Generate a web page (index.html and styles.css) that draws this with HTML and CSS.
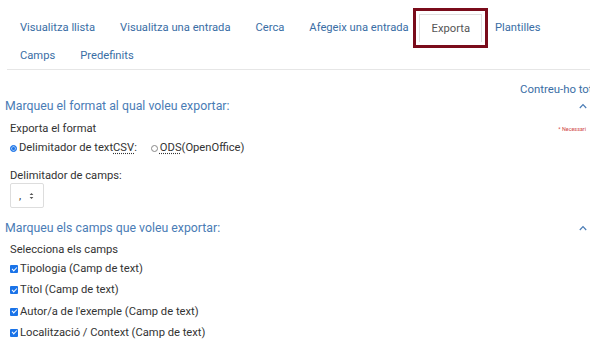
FILE: index.html
```html
<!DOCTYPE html>
<html lang="ca">
<head>
<meta charset="UTF-8">
<meta name="viewport" content="width=device-width, initial-scale=1.0">
<title>Exporta</title>
<link rel="stylesheet" href="styles.css">
</head>
<body>

<ul class="tabs">
    <li><a href="#">Visualitza llista</a></li>
    <li><a href="#">Visualitza una entrada</a></li>
    <li><a href="#">Cerca</a></li>
    <li><a href="#">Afegeix una entrada</a></li>
    <li class="active"><a href="#">Exporta</a></li>
    <li><a href="#">Plantilles</a></li>
    <li><a href="#">Camps</a></li>
    <li><a href="#">Predefinits</a></li>
</ul>

<div class="collapse-all"><a href="#">Contreu-ho tot</a></div>

<form class="export-form">
    <div class="section-head">
        <span>Marqueu el format al qual voleu exportar:</span>
        <svg class="chevron" width="8" height="6" viewBox="0 0 8 6"><path d="M0.8 5 L4 1.6 L7.2 5" fill="none" stroke="#4a7cb5" stroke-width="1.2"/></svg>
    </div>
    <div class="field-title">
        <span>Exporta el format</span>
        <span class="required">* Necessari</span>
    </div>
    <div class="radios">
        <label><input type="radio" name="format" checked> Delimitador de text<abbr title="Comma-separated values">CSV</abbr>:</label>
        <label><input type="radio" name="format"> <abbr title="OpenDocument Spreadsheet">ODS</abbr>(OpenOffice)</label>
    </div>

    <div class="field-title spaced">Delimitador de camps:</div>
    <div class="select-box">
        <span>,</span>
        <svg width="5" height="8" viewBox="0 0 5 8"><path d="M0.6 3 L2.5 1 L4.4 3 Z M0.6 5 L2.5 7 L4.4 5 Z" fill="#555"/></svg>
    </div>

    <div class="section-head second">
        <span>Marqueu els camps que voleu exportar:</span>
        <svg class="chevron" width="8" height="6" viewBox="0 0 8 6"><path d="M0.8 5 L4 1.6 L7.2 5" fill="none" stroke="#4a7cb5" stroke-width="1.2"/></svg>
    </div>
    <div class="field-title">Selecciona els camps</div>
    <div class="checks">
        <label><input type="checkbox" checked> Tipologia (Camp de text)</label>
        <label><input type="checkbox" checked> Títol (Camp de text)</label>
        <label><input type="checkbox" checked> Autor/a de l'exemple (Camp de text)</label>
        <label><input type="checkbox" checked> Localització / Context (Camp de text)</label>
    </div>
</form>

</body>
</html>
```

FILE: styles.css
```css
/* Pàgina */
body {
    margin: 0;
    padding-top: 13px;
    font-family: Roboto, "Liberation Sans", sans-serif;
    font-size: 11.2px;
    color: #333333;
    background: #ffffff;
    overflow: hidden;
}

a {
    text-decoration: none;
    color: #3a6ea5;
}

/* Pestanyes */
.tabs {
    list-style: none;
    margin: 0 0 0 7px;
    padding: 0;
    display: flex;
    flex-wrap: wrap;
    border-bottom: 1px solid #e6e6e6;
    width: 560px;
    padding-right: 23px;
}

.tabs li a {
    display: block;
    line-height: 27px;
    padding: 0 11px 0 12px;
    border: 1px solid transparent;
    border-bottom: none;
}

.tabs li.active a {
    color: #555555;
    border-color: #e0e0e0;
    background: #ffffff;
    margin: 1px 0 -2px -2px;
    outline: 3px solid #7a0c1b;
    outline-offset: 3px;
}

/* Enllaç contreu-ho tot */
.collapse-all {
    padding: 11px 0 0 520px;
    white-space: nowrap;
    line-height: 16px;
    font-size: 11.4px;
}

/* Formulari */
.export-form {
    padding: 0 3px 0 5px;
}

.section-head {
    display: flex;
    justify-content: space-between;
    align-items: center;
    color: #4a7cb5;
    line-height: 18px;
    font-size: 12.3px;
}

.section-head.second {
    margin-top: 11px;
}

.field-title {
    display: flex;
    justify-content: space-between;
    align-items: center;
    padding-left: 5px;
    margin-top: 6px;
    line-height: 16px;
}

.field-title.spaced {
    margin-top: 12px;
}

.section-head.second + .field-title {
    margin-top: 5px;
}

.required {
    color: #d04545;
    font-size: 5.4px;
    margin-right: 1px;
}

abbr {
    text-decoration: underline dotted;
    text-underline-offset: 2px;
}

/* Botons d'opció */
.radios {
    display: flex;
    gap: 14px;
    padding-left: 5px;
    margin-top: 3px;
    line-height: 16px;
}

.radios label,
.checks label {
    display: flex;
    align-items: center;
}

input[type="radio"] {
    appearance: none;
    width: 7px;
    height: 7px;
    margin: 0 2px 0 0;
    border: 1px solid #888888;
    border-radius: 50%;
    background: #ffffff;
}

input[type="radio"]:checked {
    border-color: #1a73e8;
    background: #1a73e8;
    box-shadow: inset 0 0 0 1px #9ec3f3;
}

/* Selector */
.select-box {
    margin: -1px 0 0 5px;
    width: 34px;
    height: 25px;
    border: 1px solid #dddddd;
    border-radius: 2px;
    display: flex;
    align-items: center;
    justify-content: space-between;
    padding: 0 9px 0 8px;
    box-sizing: border-box;
    font-size: 11px;
}

/* Caselles */
.checks {
    padding-left: 5px;
    margin-top: 3px;
}

.checks label {
    line-height: 16px;
    margin-bottom: 5.3px;
}

input[type="checkbox"] {
    appearance: none;
    width: 8px;
    height: 8px;
    margin: 0 2px 0 0;
    border-radius: 1px;
    background: #1a73e8;
    position: relative;
}

input[type="checkbox"]::after {
    content: "";
    position: absolute;
    left: 2.6px;
    top: 0.6px;
    width: 1.8px;
    height: 4px;
    border: solid #ffffff;
    border-width: 0 1.2px 1.2px 0;
    transform: rotate(45deg);
}
```
